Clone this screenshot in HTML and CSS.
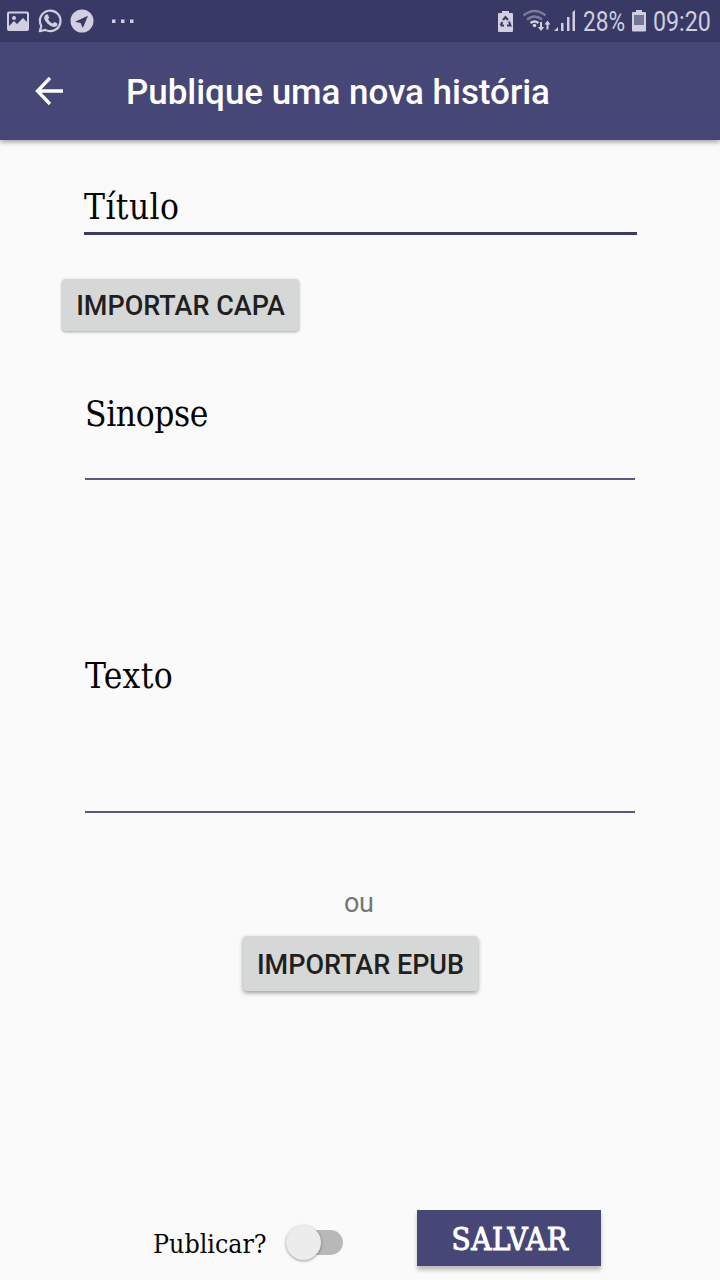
FILE: index.html
```
<!DOCTYPE html>
<html lang="pt">
<head>
<meta charset="utf-8">
<title>Publique uma nova história</title>
<link rel="stylesheet" href="styles.css">
</head>
<body>
<div class="status">
  <svg class="notifications" width="150" height="42" viewBox="0 0 150 42">
    <path fill-rule="evenodd" d="M9 11.500h18a2 2 0 0 1 2 2V29a2 2 0 0 1-2 2H9a2 2 0 0 1-2-2V13.500a2 2 0 0 1 2-2zm0 2V26l5-5 3 3 6-6 4 4v-8.500z"/>
    <circle cx="14" cy="18" r="2"/>
    <path class="ring" d="M39.800 31.200l1.500-5.200a10.300 10.300 0 1 1 4 3.900z"/>
    <path d="M45.500 15c1-1.200 2.300-.8 2.600 0l1 2.500c.2.700-1.100 1.600-.9 2 1 2 2.500 3.200 4.400 4 .6.200 1.400-1.600 2.100-1.400l2.600 1.300c.8.600-.2 2.600-1.300 3.200-2.400 1.200-6.300-.8-8.600-3.200-2.800-3-4.500-5.500-1.900-8.400z"/>
    <path fill-rule="evenodd" d="M82 9.500a11.500 11.500 0 1 1 0 23 11.500 11.500 0 0 1 0-23zm6 6.200l-13 6.100 5.600 1.100 2.200 5.200z"/>
    <path d="M112 19.500h3.500v3.500H112zM121 19.500h3.500v3.500H121zM130 19.500h3.500v3.500H130z"/>
  </svg>
  <div class="system">
    <svg width="82" height="42" viewBox="496 0 82 42">
      <path d="M502 11h7v2h3q1 0 1 1v17q0 1-1 1h-13q-1 0-1-1V14q0-1 1-1h3z"/>
      <g class="recycle"><path d="M503 20l2.500-3 2.500 3M509 21.500l1.500 4H507M500.500 25.500h3.500M500.500 25l2-3"/></g>
      <g class="wifi"><path class="dim" d="M523.500 15.500q11-9 22 0M527 19.500q7.500-6 15 0"/><path d="M530.500 23q4-3 8 0"/></g>
      <circle cx="534.500" cy="25.500" r="1.800"/>
      <path d="M540 22h2v5h2.200l-3.200 4-3.200-4h2.200zM546.500 29.500v-5h-2l3-4 3 4h-2v5z"/>
      <path d="M554 31l4-4v4zM561 23h2.500v8H561zM567 17h2.500v14H567zM572.500 12l2.500-2v21h-2.500z"/>
    </svg>
    <span class="battery-level">28%</span>
    <svg width="14" height="42" viewBox="632 0 14 42">
      <path d="M636 10h6v2h3q1 0 1 1v17.500q0 1-1 1h-12q-1 0-1-1V13q0-1 1-1h3z"/>
      <path class="drained" d="M634 15h10v10h-10z"/>
    </svg>
    <span class="clock">09:20</span>
  </div>
</div>
<header class="appbar">
  <svg class="back" width="30" height="30" viewBox="0 0 30 30"><path d="M30 15H4.500M17 2L4.500 15 17 28"/></svg>
  <h1>Publique uma nova história</h1>
</header>
<main>
  <div class="field title">Título</div>
  <button class="import cover">IMPORTAR CAPA</button>
  <div class="field synopsis">Sinopse</div>
  <div class="field story">Texto</div>
  <p class="or">ou</p>
  <button class="import epub">IMPORTAR EPUB</button>
  <div class="actions">
    <span class="publish">Publicar?</span>
    <span class="switch"><span class="thumb"></span></span>
    <button class="save">SALVAR</button>
  </div>
</main>
</body>
</html>
```
FILE: styles.css
```
* { box-sizing: border-box; }
body { margin: 0; width: 720px; height: 1280px; overflow: hidden; background: #fafafa; font-family: Roboto, sans-serif; }
button { border: 0; padding: 0; display: block; }
svg { display: block; flex: none; }

.status { height: 42px; background: #393965; color: #cfcde0; display: flex; justify-content: space-between; }
.status path, .status circle { fill: #d0cee0; }
.status .ring { fill: none; stroke: #d0cee0; stroke-width: 2.2; stroke-linejoin: round; }
.status .recycle path { fill: none; stroke: #393965; stroke-width: 2; }
.status .wifi path { fill: none; stroke: #d0cee0; stroke-width: 2.4; }
.status .wifi .dim { stroke: #7d7b9c; }
.status .drained { fill: #77769a; }
.system { display: flex; width: 224px; }
.battery-level, .clock { font-size: 27px; line-height: 45px; white-space: nowrap; transform-origin: left; }
.battery-level { width: 42px; margin: 0 7px 0 5px; transform: scaleX(.84); }
.clock { width: 58px; margin-left: 7px; transform: scaleX(.86); }

.appbar { position: relative; height: 98px; background: #474777; box-shadow: 0 2px 5px rgba(0,0,0,.38); display: flex; align-items: center; padding-left: 33px; }
.back path { fill: none; stroke: #fff; stroke-width: 3.3; }
h1 { margin: 4px 0 0 63px; color: #fff; font-size: 35px; font-weight: 500; line-height: 40px; letter-spacing: -.04px; white-space: nowrap; }

main { display: flex; flex-direction: column; height: 1140px; }
.field { font-family: "DejaVu Serif Condensed", "DejaVu Serif", serif; font-stretch: condensed; font-size: 35px; line-height: 42px; color: #050505; margin-left: 85px; width: 550px; flex: none; }
.title { margin: 46px 0 0 84px; width: 553px; height: 49px; border-bottom: 3px solid #3c3b66; letter-spacing: .4px; }
.synopsis { margin-top: 62px; height: 87px; border-bottom: 2px solid #5b5983; letter-spacing: -.4px; }
.story { margin-top: 175px; height: 158px; border-bottom: 2px solid #5b5983; letter-spacing: .35px; }
.import { flex: none; background: #d6d8d7; color: #1f1f1f; border-radius: 4px; font: 500 27px/54px Roboto, sans-serif; white-space: nowrap; }
.cover { margin: 44px 0 0 62px; width: 237px; height: 52px; box-shadow: 0 1px 3px rgba(0,0,0,.35); }
.or { margin: 74px 0 0 344px; font-size: 27px; line-height: 32px; letter-spacing: -.4px; color: #767676; }
.epub { margin: 17px 0 0 243px; width: 235px; height: 55px; line-height: 55px; padding-top: 2px; box-shadow: 0 2px 4px rgba(0,0,0,.38); }
.actions { display: flex; align-items: flex-start; margin: 219px 0 0 153px; }
.publish { width: 133px; padding-top: 16px; font: 26.500px/36px "DejaVu Serif Condensed", "DejaVu Serif", serif; font-stretch: condensed; color: #050505; }
.switch { width: 57px; height: 25px; margin-top: 20px; border-radius: 13px; background: #b8b8b8; }
.thumb { display: block; width: 35px; height: 35px; margin-top: -5px; border-radius: 50%; background: #ececec; box-shadow: 0 1px 3px rgba(0,0,0,.4); }
.save { width: 184px; height: 56px; margin-left: 74px; padding-left: 2px; background: #474777; color: #fff; box-shadow: 0 4px 4px rgba(0,0,0,.25); font: 31px/58px "DejaVu Serif Condensed", "DejaVu Serif", serif; font-stretch: condensed; letter-spacing: .6px; -webkit-text-stroke: 1px #fff; }
```
